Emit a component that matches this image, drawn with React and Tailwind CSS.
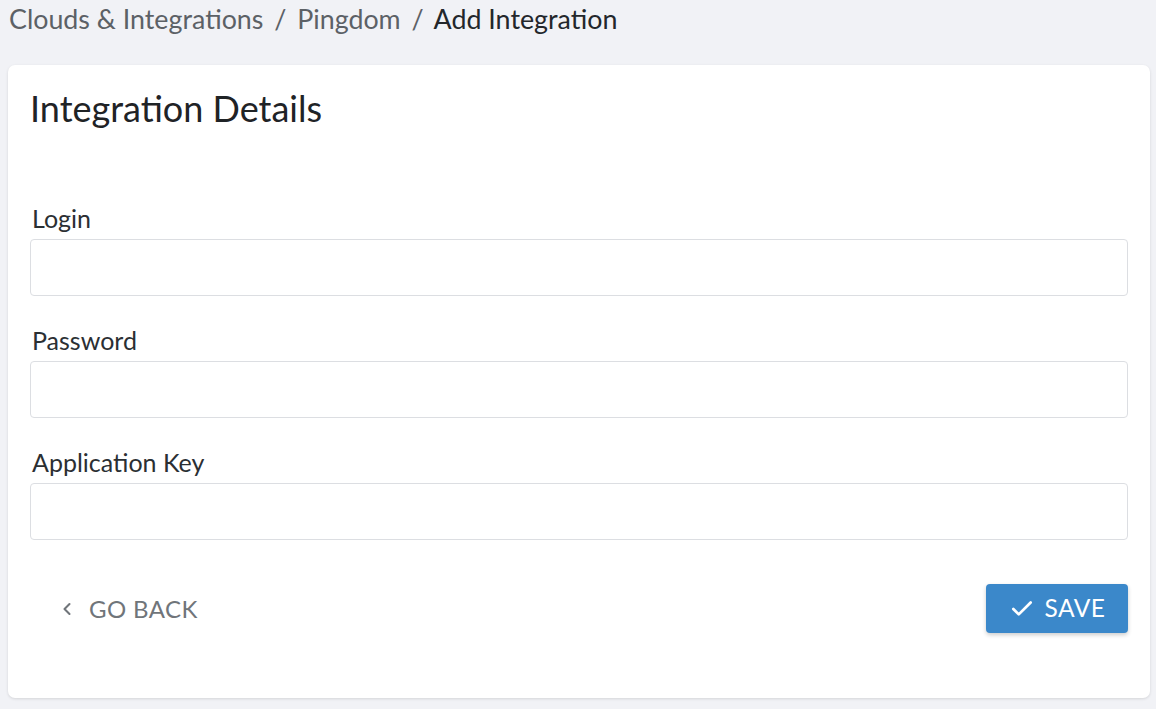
import { Check, ChevronLeft } from 'lucide-react'

function Field({ label, type = 'text' }) {
  return (
    <div className="flex flex-col">
      <label className="text-[25px] leading-[28px] text-[#2b2f33] pl-[2px] mb-[7px]">{label}</label>
      <input type={type} className="h-[57px] w-full rounded-[4px] border border-[#dcdee2] bg-white px-3 outline-none" />
    </div>
  )
}

export default function App() {
  return (
    <div className="min-h-[709px] bg-[#f1f2f6] pl-[8px] pr-[6px] pt-[1px] pb-[11px] font-['Lato','Open_Sans',sans-serif]">
      <div className="text-[26.8px] leading-[36px] pl-[1px] text-[#5c6166]">
        Clouds &amp; Integrations <span className="mx-[4px]">/</span> Pingdom <span className="mx-[4px]">/</span>{' '}
        <span className="text-[#23272b]">Add Integration</span>
      </div>
      <div className="mt-[28px] bg-white rounded-[7px] shadow-[0_1px_3px_rgba(0,0,0,0.12)] px-[22px] pt-[22px] pb-[65px]">
        <h2 className="text-[36px] leading-[42px] text-[#1f2326]">Integration Details</h2>
        <div className="mt-[75px] flex flex-col gap-[30px]">
          <Field label="Login" />
          <Field label="Password" type="password" />
          <Field label="Application Key" />
        </div>
        <div className="mt-[44px] flex items-center justify-between">
          <button className="flex items-center gap-[12px] pl-[27px] text-[24px] tracking-[0.4px] text-[#70757a]">
            <ChevronLeft size={20} strokeWidth={2.5} />
            GO BACK
          </button>
          <button className="flex items-center gap-[10px] h-[49px] w-[142px] justify-center rounded-[4px] bg-[#3b88ca] text-white text-[24.5px] tracking-[0.5px] shadow-[0_2px_4px_rgba(0,0,0,0.2)]">
            <Check size={26} strokeWidth={2.5} />
            SAVE
          </button>
        </div>
      </div>
    </div>
  )
}
